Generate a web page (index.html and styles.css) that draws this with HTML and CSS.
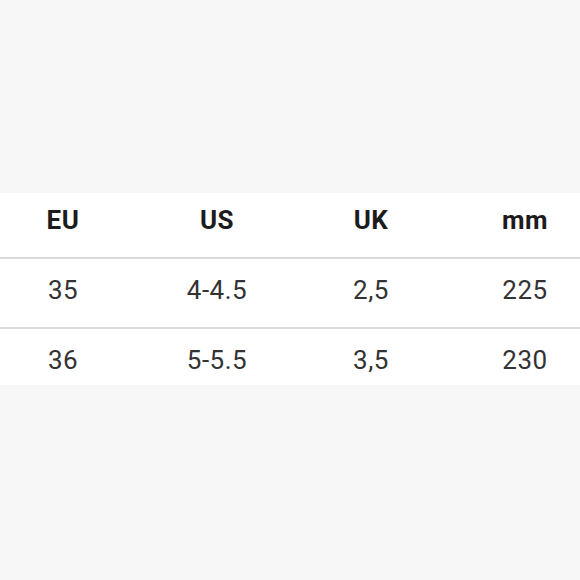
FILE: index.html
```html
<!DOCTYPE html>
<html lang="en">
<head>
<meta charset="utf-8">
<title>Size chart</title>
<link rel="stylesheet" href="styles.css">
</head>
<body>
<div class="page">
  <div class="size-table">
    <div class="row head">
      <div class="cell">EU</div>
      <div class="cell">US</div>
      <div class="cell">UK</div>
      <div class="cell">mm</div>
    </div>
    <div class="row body first">
      <div class="cell">35</div>
      <div class="cell">4-4.5</div>
      <div class="cell">2,5</div>
      <div class="cell">225</div>
    </div>
    <div class="row body last">
      <div class="cell">36</div>
      <div class="cell">5-5.5</div>
      <div class="cell">3,5</div>
      <div class="cell">230</div>
    </div>
  </div>
</div>
</body>
</html>
```
FILE: styles.css
```css
html, body {
  margin: 0;
  padding: 0;
  background: #f7f7f7;
}
body {
  width: 580px;
  height: 580px;
  overflow: hidden;
  font-family: Roboto, "Liberation Sans", sans-serif;
}
.page {
  padding-top: 193px;
}
.size-table {
  background: #ffffff;
  margin-left: -14px;
  width: 616px;
}
.row {
  display: grid;
  grid-template-columns: repeat(4, 154px);
  box-sizing: border-box;
}
.cell {
  text-align: center;
  font-size: 26px;
  line-height: 26px;
  letter-spacing: 0.5px;
}
.head {
  height: 66px;
  padding-top: 14px;
  border-bottom: 2px solid #dcdcdc;
}
.head .cell {
  font-weight: 700;
  color: #1c1c1c;
}
.body .cell {
  font-weight: 400;
  color: #333333;
}
.first {
  height: 70px;
  padding-top: 18px;
  border-bottom: 2px solid #dcdcdc;
}
.last {
  height: 56px;
  padding-top: 18px;
}
```
